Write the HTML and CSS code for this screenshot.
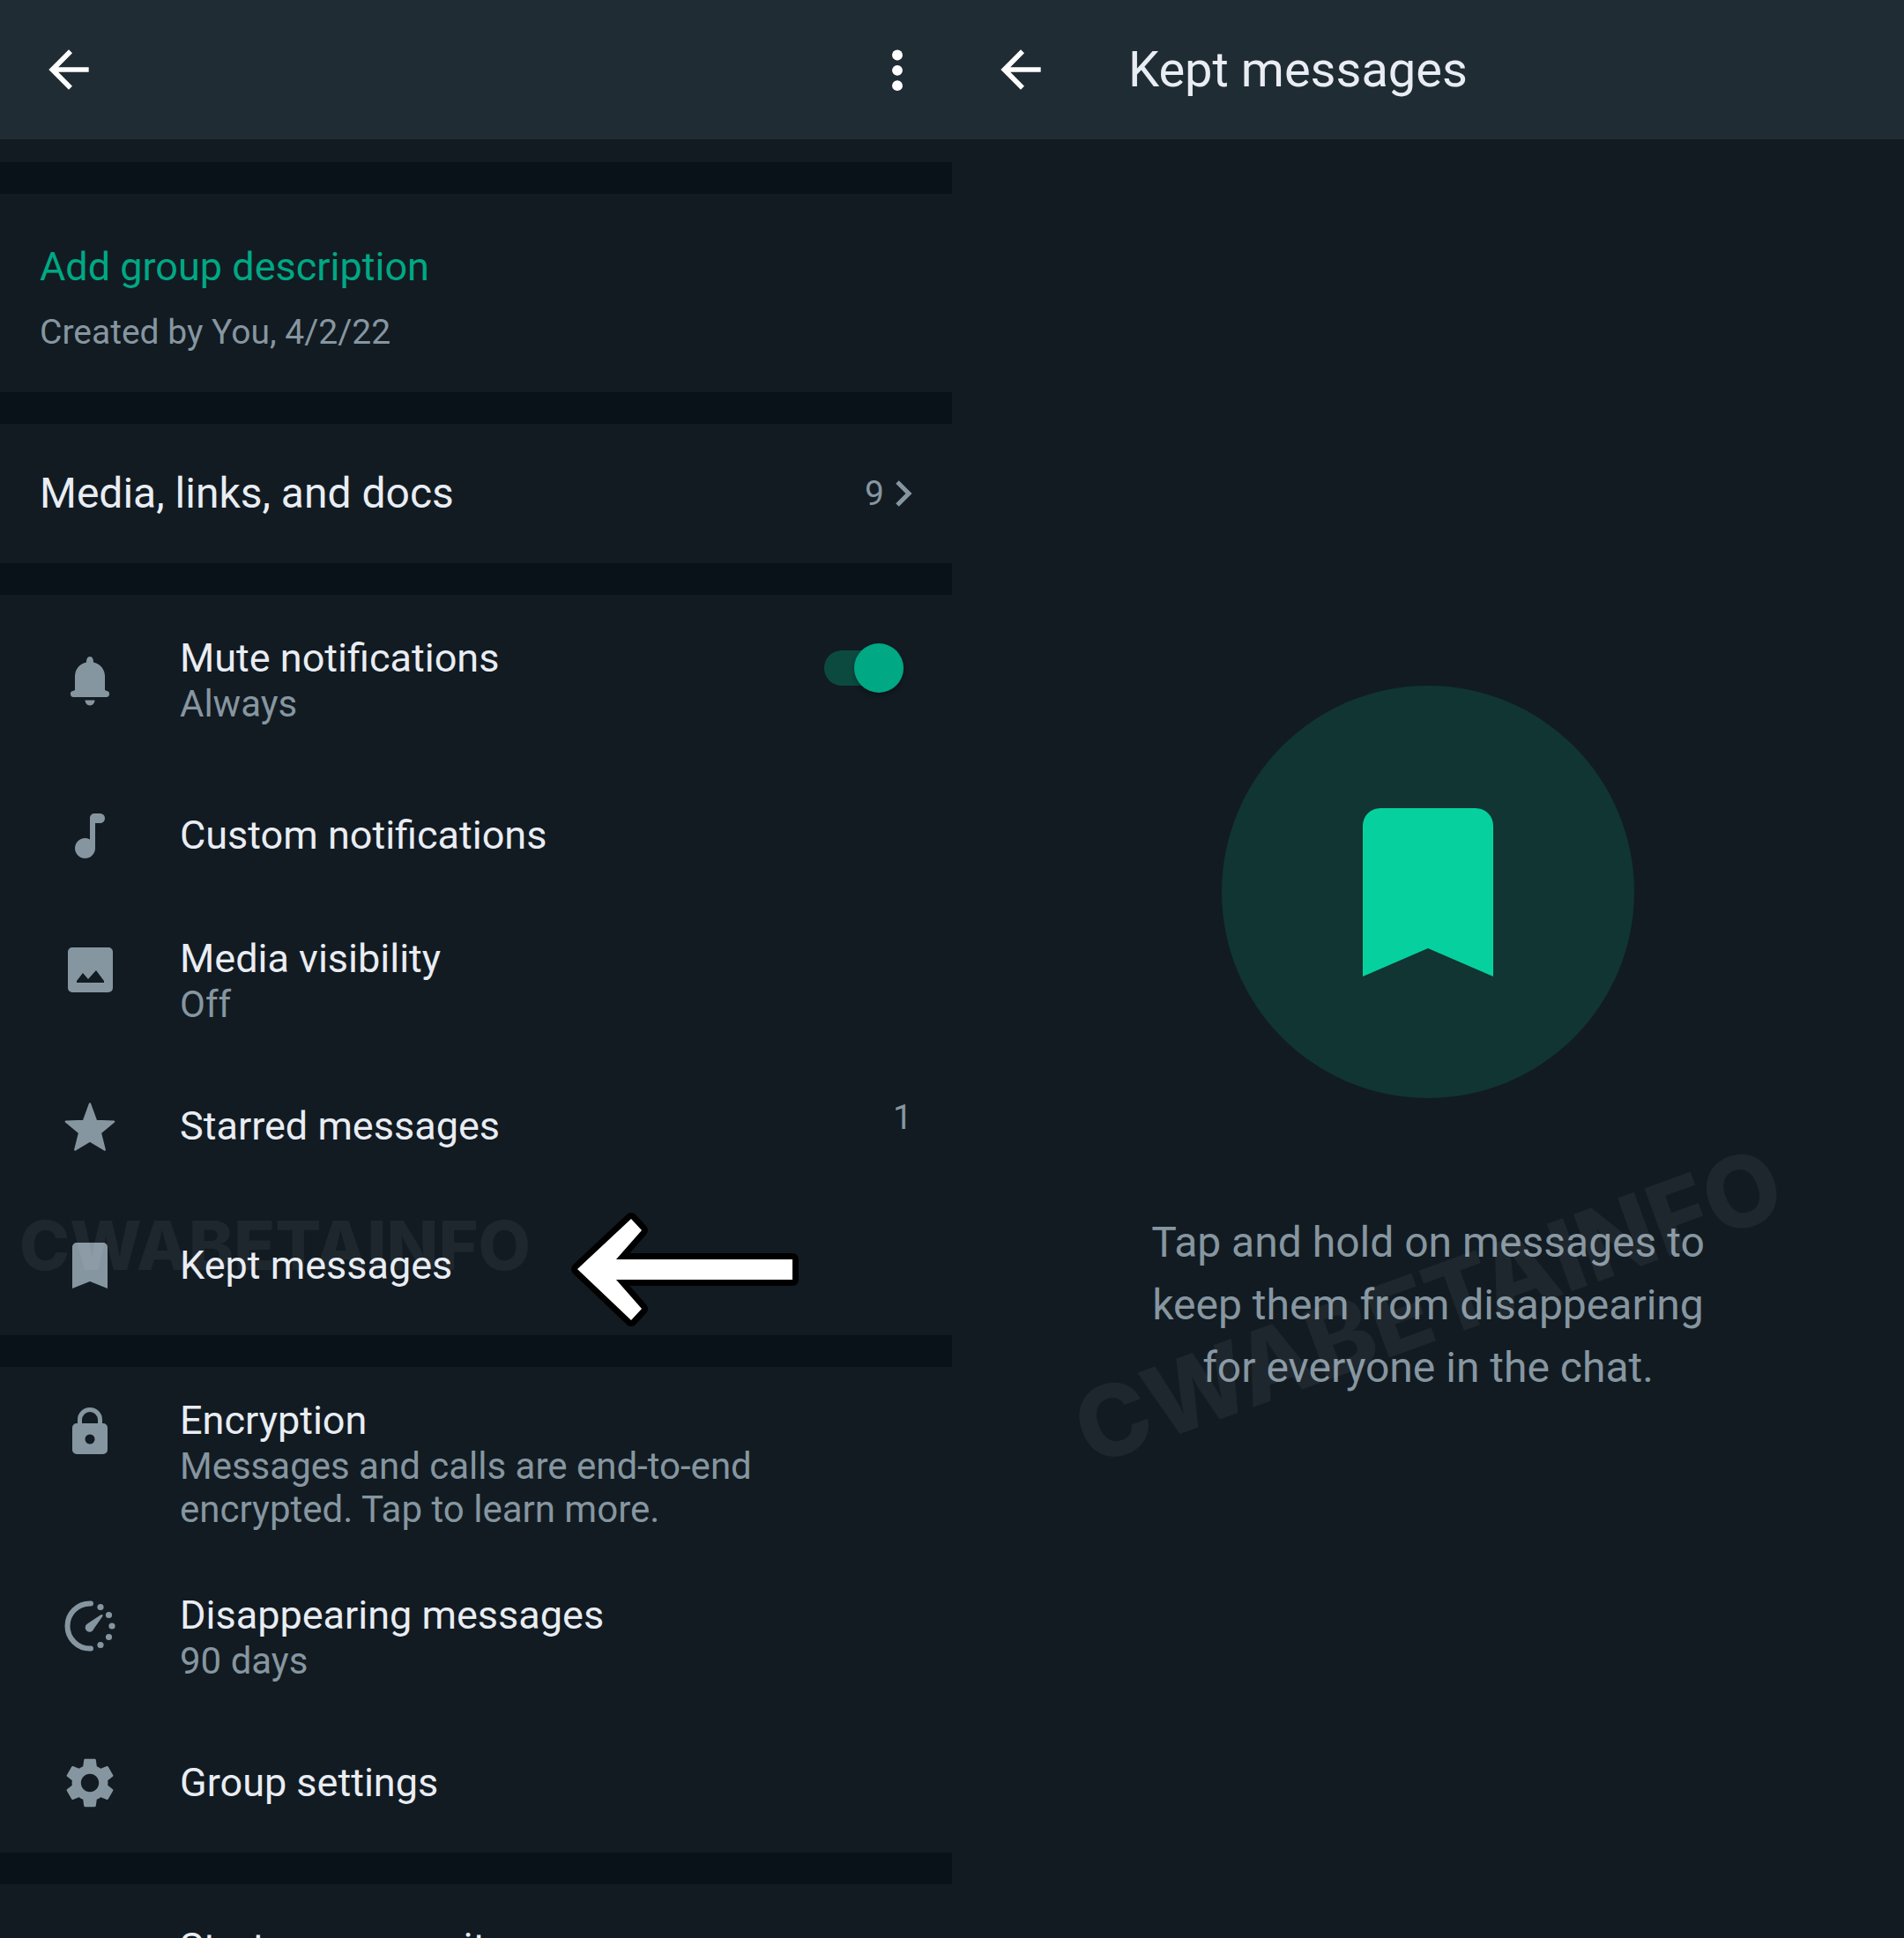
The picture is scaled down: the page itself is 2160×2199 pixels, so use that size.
FILE: index.html
```html
<!DOCTYPE html>
<html lang="en">
<head>
    <meta charset="UTF-8">
    <meta name="viewport" content="width=device-width, initial-scale=1.0">
    <title>Kept messages</title>
    <link rel="stylesheet" href="styles.css">
</head>
<body>
    <!-- Group info -->
    <div class="screen">
        <header class="app-bar">
            <button type="button" class="icon-button" aria-label="Back">
                <svg class="icon" viewBox="0 0 24 24"><path d="M20 11H7.83l5.59-5.59L12 4l-8 8 8 8 1.41-1.41L7.83 13H20v-2z"/></svg>
            </button>
            <button type="button" class="icon-button menu-button" aria-label="More options">
                <svg class="icon" viewBox="0 0 24 24"><circle cx="12" cy="6.2" r="2.1"/><circle cx="12" cy="12.3" r="2.1"/><circle cx="12" cy="18.4" r="2.1"/></svg>
            </button>
        </header>

        <main class="group-info">
            <section class="section description">
                <a href="#description" class="add-description">Add group description</a>
                <p class="created">Created by You, 4/2/22</p>
            </section>

            <section class="section">
                <a href="#media" class="media-link">
                    <span class="media-title">Media, links, and docs</span>
                    <span class="count">9</span>
                    <svg class="chevron" viewBox="0 0 20 32"><path d="M3 3l13 13L3 29"/></svg>
                </a>
            </section>

            <section class="section">
                <label class="row mute-row" for="mute">
                    <svg class="icon" viewBox="0 0 68 68"><path d="M34 7c3 0 4 3 4 6.500 8 2 13 8 13 16V45l2 1a3.500 3.500 0 0 1-1 7H16a3.500 3.500 0 0 1-1-7l2-1V29.500c0-8 5-14 13-16 0-3.500 1-6.500 4-6.500zM28.500 56.500h11c0 3-2.500 6-5.500 6s-5.500-3-5.500-6z"/></svg>
                    <span class="row-text">
                        <span class="row-title">Mute notifications</span>
                        <span class="row-subtitle">Always</span>
                    </span>
                    <input type="checkbox" id="mute" class="switch" checked>
                </label>
                <a href="#custom" class="row">
                    <svg class="icon" viewBox="0 0 68 68"><path d="M39 9h6.500a5.500 5.500 0 0 1 0 11H40v28.500a11.500 11.500 0 1 1-6-10.100V14a5 5 0 0 1 5-5z"/></svg>
                    <span class="row-title">Custom notifications</span>
                </a>
                <a href="#visibility" class="row two-line">
                    <svg class="icon" viewBox="0 0 68 68"><path fill-rule="evenodd" d="M14 9h41a5 5 0 0 1 5 5v41a5 5 0 0 1-5 5H14a5 5 0 0 1-5-5V14a5 5 0 0 1 5-5zM19 49h31v-2l-9-12-9 10-6-7-7 9z"/></svg>
                    <span class="row-text">
                        <span class="row-title">Media visibility</span>
                        <span class="row-subtitle">Off</span>
                    </span>
                </a>
                <a href="#starred" class="row">
                    <svg class="icon icon-star" viewBox="0 -0.7 24 24"><path d="M12 17.1L17.900 20.700l-1.700-6.800L21.600 9.400l-7.100-.3L12 2.300 9.500 9.100 2.400 9.400l5.400 4.500L6.100 20.700z"/></svg>
                    <span class="row-title">Starred messages</span>
                    <span class="count starred-count">1</span>
                </a>
                <a href="#kept" class="row kept-row">
                    <svg class="icon" viewBox="0 0 68 68"><path d="M19 8h30a5 5 0 0 1 5 5v47l-20-8-20 8V13a5 5 0 0 1 5-5z"/></svg>
                    <span class="row-title">Kept messages</span>
                    <span class="watermark" aria-hidden="true">CWABETAINFO</span>
                    <svg class="pointer" viewBox="0 0 260 132"><path d="M7 66L68 9l12 13-29 33h200v23H51l29 33-12 13z"/></svg>
                </a>
            </section>

            <section class="section">
                <a href="#encryption" class="row two-line">
                    <svg class="icon" viewBox="0 0 68 68"><path fill-rule="evenodd" d="M20 25v-4a14 14 0 0 1 28 0v4h1a5 5 0 0 1 5 5v25a5 5 0 0 1-5 5H19a5 5 0 0 1-5-5V30a5 5 0 0 1 5-5zM25 25h18v-4a9 9 0 0 0-18 0zM34 37.500a5.500 5.500 0 1 0 0 11 5.500 5.500 0 0 0 0-11z"/></svg>
                    <span class="row-text">
                        <span class="row-title">Encryption</span>
                        <span class="row-subtitle">Messages and calls are end-to-end encrypted. Tap to learn more.</span>
                    </span>
                </a>
                <a href="#disappearing" class="row two-line">
                    <svg class="icon" viewBox="0 0 68 68">
                        <path class="dial" d="M35 8.500h-1a25.500 25.500 0 0 0 0 51h1"/>
                        <circle cx="46" cy="12.500" r="3.600"/>
                        <circle cx="55.500" cy="21.500" r="3.600"/>
                        <circle cx="59" cy="34" r="3.600"/>
                        <circle cx="55.500" cy="46.500" r="3.600"/>
                        <circle cx="46" cy="55.500" r="3.600"/>
                        <path d="M46 21.500c2-1.500 3.500 0 2 2L38.500 37a5 5 0 1 1-7.500-5.500z"/>
                    </svg>
                    <span class="row-text">
                        <span class="row-title">Disappearing messages</span>
                        <span class="row-subtitle">90 days</span>
                    </span>
                </a>
                <a href="#settings" class="row">
                    <svg class="icon" viewBox="0 0 24 24"><path d="M19.140 12.940c.04-.3.06-.61.06-.94 0-.32-.02-.64-.07-.94l2.030-1.580c.18-.14.23-.41.12-.61l-1.920-3.320c-.12-.22-.37-.29-.59-.22l-2.390.96c-.5-.38-1.030-.7-1.620-.94l-.36-2.540c-.04-.24-.24-.41-.48-.41h-3.840c-.24 0-.43.17-.47.41l-.36 2.540c-.59.24-1.130.57-1.620.94l-2.390-.96c-.22-.08-.47 0-.59.22L2.740 8.870c-.12.21-.08.47.12.61l2.030 1.580c-.05.3-.09.63-.09.94s.02.64.07.94l-2.030 1.580c-.18.14-.23.41-.12.61l1.920 3.320c.12.22.37.29.59.22l2.390-.96c.5.38 1.030.7 1.620.94l.36 2.540c.05.24.24.41.48.41h3.840c.24 0 .44-.17.47-.41l.36-2.540c.59-.24 1.130-.56 1.620-.94l2.390.96c.22.08.47 0 .59-.22l1.920-3.320c.12-.22.07-.47-.12-.61l-2.010-1.580zM12 15.600c-1.980 0-3.600-1.620-3.600-3.600s1.620-3.600 3.600-3.600 3.600 1.620 3.600 3.600-1.620 3.600-3.600 3.600z"/></svg>
                    <span class="row-title">Group settings</span>
                </a>
            </section>

            <section class="section">
                <a href="#community" class="row community-row">
                    <span class="row-title">Start a community</span>
                </a>
            </section>
        </main>
    </div>

    <!-- Kept messages -->
    <div class="screen">
        <header class="app-bar">
            <button type="button" class="icon-button" aria-label="Back">
                <svg class="icon" viewBox="0 0 24 24"><path d="M20 11H7.83l5.59-5.59L12 4l-8 8 8 8 1.41-1.41L7.83 13H20v-2z"/></svg>
            </button>
            <h1>Kept messages</h1>
        </header>

        <main class="empty-state">
            <svg class="empty-icon" viewBox="0 0 468 468">
                <circle class="empty-circle" cx="234" cy="234" r="234"/>
                <path class="empty-bookmark" d="M180 139h108a20 20 0 0 1 20 20v171l-74-32-74 32V159a20 20 0 0 1 20-20z"/>
            </svg>
            <div class="empty-text">
                <p>Tap and hold on messages to keep them from disappearing for everyone in the chat.</p>
                <span class="watermark watermark-tilted" aria-hidden="true">CWABETAINFO</span>
            </div>
        </main>
    </div>
</body>
</html>
```

FILE: styles.css
```css
:root {
    --bar: #1f2c33;
    --background: #121b22;
    --divider: #0a1219;
    --text: #e9edf3;
    --muted: #8696a0;
    --accent: #00a884;
    --accent-bright: #06d19e;
}

* {
    box-sizing: border-box;
    margin: 0;
    padding: 0;
    font-family: Roboto, 'Liberation Sans', sans-serif;
}

body {
    display: grid;
    grid-template-columns: 1fr 1fr;
    height: 100vh;
    overflow: hidden;
    background-color: var(--background);
    color: var(--text);
}

a {
    color: inherit;
    text-decoration: none;
}

.screen {
    display: flex;
    flex-direction: column;
    height: 100vh;
    min-width: 0;
    overflow: hidden;
}

/* App bar */
.app-bar {
    display: flex;
    align-items: center;
    flex-shrink: 0;
    gap: 88px;
    height: 158px;
    padding: 0 28px 0 44px;
    background-color: var(--bar);
}

.app-bar h1 {
    font-size: 56px;
    font-weight: 400;
    line-height: 68px;
}

.icon-button {
    display: flex;
    border: none;
    background: none;
    color: white;
    cursor: pointer;
}

.menu-button {
    margin-left: auto;
}

.icon {
    flex-shrink: 0;
    width: 68px;
    height: 68px;
    fill: currentColor;
}

/* Group info */
.group-info {
    padding-top: 26px;
}

.section {
    border-top: 36px solid var(--divider);
}

.description {
    padding: 56px 45px 45px;
}

.add-description {
    display: block;
    margin-bottom: 25px;
    color: var(--accent);
    font-size: 45px;
    line-height: 53px;
}

.created {
    color: var(--muted);
    font-size: 39px;
    line-height: 46px;
}

.media-link {
    display: flex;
    align-items: center;
    height: 158px;
    padding: 0 45px;
}

.media-title {
    flex: 1;
    font-size: 48px;
    line-height: 56px;
}

.count {
    color: var(--muted);
    font-size: 39px;
    line-height: 46px;
}

.chevron {
    width: 20px;
    height: 32px;
    margin-left: 12px;
    fill: none;
    stroke: var(--muted);
    stroke-width: 5;
}

.row {
    display: flex;
    align-items: center;
    gap: 68px;
    min-height: 158px;
    padding: 34px 45px 35px 68px;
}

.row .icon {
    color: var(--muted);
}

.mute-row {
    padding-top: 45px;
    padding-bottom: 46px;
}

.two-line {
    align-items: flex-start;
}

.two-line .icon {
    margin-top: 5px;
}

.row-text {
    flex: 1;
    max-width: 720px;
}

.row-title {
    display: block;
    font-size: 45px;
    line-height: 53px;
}

.row-subtitle {
    display: block;
    margin-top: 1px;
    color: var(--muted);
    font-size: 42px;
    line-height: 49px;
}

.icon-star {
    stroke: currentColor;
    stroke-width: 0.8;
    stroke-linejoin: round;
}

.dial {
    fill: none;
    stroke: currentColor;
    stroke-width: 6;
    stroke-linecap: round;
}

.starred-count {
    align-self: flex-start;
    margin-top: 12px;
    margin-left: auto;
}

.switch {
    appearance: none;
    position: relative;
    align-self: flex-start;
    width: 90px;
    height: 40px;
    margin: 18px 10px 0 0;
    border-radius: 20px;
    background-color: #0c4a40;
    cursor: pointer;
}

.switch::after {
    content: "";
    position: absolute;
    top: -8px;
    right: 0;
    width: 56px;
    height: 56px;
    border-radius: 50%;
    background-color: var(--accent);
    box-shadow: 0 3px 5px rgba(0,0,0,0.3);
}

.community-row {
    align-items: flex-start;
    padding-top: 45px;
    padding-left: 204px;
}

/* Overlays */
.kept-row {
    position: relative;
}

.watermark {
    position: absolute;
    top: 8px;
    left: 22px;
    color: rgba(255,255,255,0.055);
    font-family: Inter, Roboto, sans-serif;
    font-size: 77px;
    font-weight: 800;
    line-height: 96px;
    white-space: nowrap;
    pointer-events: none;
}

.watermark-tilted {
    top: 50%;
    left: 50%;
    font-size: 112px;
    transform: translate(-50%, -50%) rotate(-20deg);
}

.pointer {
    position: absolute;
    top: 17px;
    left: 648px;
    width: 260px;
    height: 132px;
    fill: white;
    stroke: black;
    stroke-width: 14;
    stroke-linejoin: round;
    paint-order: stroke;
}

/* Empty state */
.empty-state {
    display: flex;
    flex: 1;
    flex-direction: column;
    align-items: center;
    justify-content: center;
    gap: 128px;
    padding-top: 8px;
}

.empty-icon {
    width: 468px;
    height: 468px;
}

.empty-circle {
    fill: #103532;
}

.empty-bookmark {
    fill: var(--accent-bright);
}

.empty-text {
    position: relative;
    max-width: 680px;
    color: var(--muted);
    font-size: 48px;
    line-height: 71px;
    text-align: center;
}
```
